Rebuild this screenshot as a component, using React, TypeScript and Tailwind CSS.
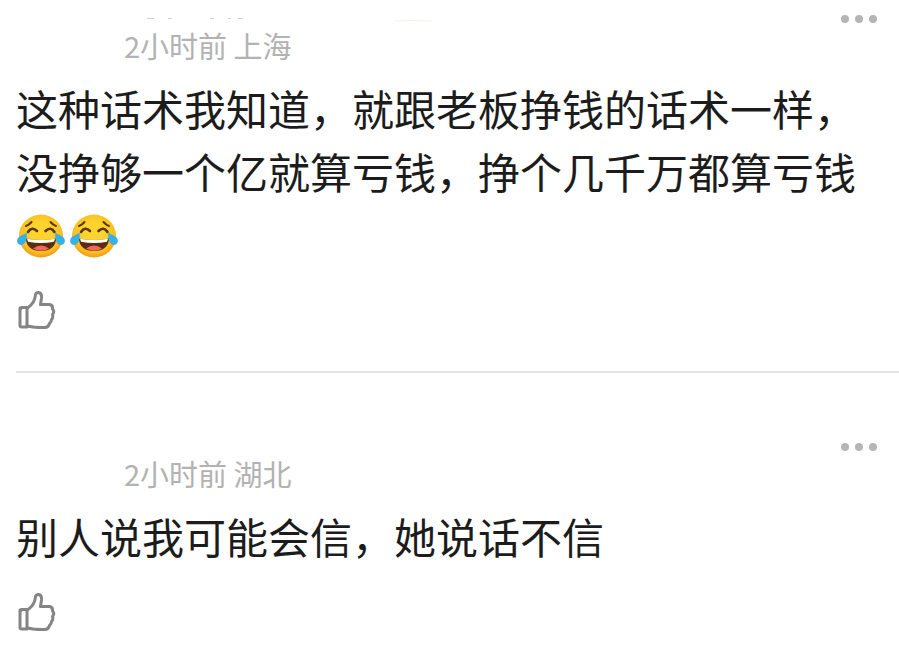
import React from "react";

function JoyEmoji() {
  return (
    <svg viewBox="0 -2 53 48" className="inline-block h-12 w-[53px] align-middle" role="img" aria-label="😂">
      <defs>
        <radialGradient id="face" cx="50%" cy="42%" r="58%">
          <stop offset="0.4" stopColor="#fdd42e" />
          <stop offset="0.8" stopColor="#fbbf1e" />
          <stop offset="1" stopColor="#ee9a1c" />
        </radialGradient>
      </defs>
      <ellipse cx="25" cy="24" rx="22" ry="21.500" fill="url(#face)" />
      <g fill="none" stroke="#5a3310" strokeLinecap="round">
        <path d="M10 14q3-1 5.500-4" strokeWidth="2" />
        <path d="M34.500 10q2.500 3 5.500 4" strokeWidth="2" />
        <path d="M12 20q4-6 9-1" strokeWidth="2.600" />
        <path d="M29.500 19q5-5 9 1" strokeWidth="2.600" />
      </g>
      <path d="M10 26.500q15 3 30 0c0 8-6 12.500-15 12.500S10 34.500 10 26.500z" fill="#5a2d10" />
      <path d="M11 26.800q14 2.600 28 0l-1 3q-13 2.500-26 0z" fill="#fff" />
      <path d="M17 36.500q8-6 16 0-7.500 4.500-16 0z" fill="#ef6a5b" />
      <path d="M10.500 20.500c1 6-1 12-5 12.500-4 .3-5.500-4-3.500-7 2-2.600 5-2.500 8.500-5.500z" fill="#36b0e8" />
      <path d="M39.500 20.500c-1 6 1 12 5 12.500 4 .3 5.500-4 3.500-7-2-2.600-5-2.500-8.500-5.500z" fill="#36b0e8" />
    </svg>
  );
}

function ThumbIcon() {
  return (
    <svg viewBox="0 0 38 38" className="size-[38px]" fill="none" stroke="#858585" strokeWidth="3" strokeLinejoin="round" strokeLinecap="round" aria-hidden="true">
      <path d="M3 17.500Q3 16.500 4 16.500H9V36H4Q2 36 2 34.500V17.500Q2 16.500 4 16.500" />
      <path d="M9.500 17Q17 12 17.500 3.500Q18 1.500 20.500 1.500Q24 2 23.500 7L22.500 13.500H31.500Q35 14 34.500 18Q37 20.500 34.500 23.500Q35.500 26.500 33.500 28.500Q33.500 31 31.500 32.500Q30.500 36 27.500 36.500Q18 37 9.500 35" />
    </svg>
  );
}

function ClippedName() {
  return (
    <svg viewBox="0 0 340 6" className="absolute left-[108px] top-4 h-1.5 w-[340px]" fill="none" stroke="#d2d2d2" strokeWidth="1" aria-hidden="true">
      <path d="M23 2.500h7M44 2.500h4M86 2.500h4M104 2.500h3M114 2.500h5" />
      <path d="M270 5q18-1 38 0" stroke="#f8f3e8" />
    </svg>
  );
}

type CommentProps = { place: string; children: React.ReactNode; clipped?: boolean };

function Comment({ place, children, clipped }: CommentProps) {
  return (
    <article className="pr-[22px] pl-4">
      <header className="relative flex h-[76px] items-start justify-between">
        {clipped && <ClippedName />}
        <p className="pt-[25px] pl-[108px] text-[29px] leading-10 text-[#b2b2b2]">2小时前 {place}</p>
        <button type="button" aria-label="更多" className="mt-[15px] flex gap-1.5">
          <span className="size-2 rounded-full bg-[#b5b5b5]" />
          <span className="size-2 rounded-full bg-[#b5b5b5]" />
          <span className="size-2 rounded-full bg-[#b5b5b5]" />
        </button>
      </header>
      <p className="text-[42px] leading-[63px] text-[#1c1c1c]">{children}</p>
      <button type="button" aria-label="点赞" className="mt-[26px] ml-0.5 block">
        <ThumbIcon />
      </button>
    </article>
  );
}

export default function App() {
  return (
    <main className="min-h-screen bg-white font-['Noto_Sans_CJK_SC',sans-serif]" lang="zh-CN">
      <Comment place="上海" clipped>
        这种话术我知道，就跟老板挣钱的话术一样，没挣够一个亿就算亏钱，挣个几千万都算亏钱
        <span className="flex h-[63px] items-center">
          <JoyEmoji />
          <JoyEmoji />
        </span>
      </Comment>
      <hr className="mt-[42px] mb-[55px] ml-4 border-t-2 border-[#e3e3e3]" />
      <Comment place="湖北">别人说我可能会信，她说话不信</Comment>
    </main>
  );
}
